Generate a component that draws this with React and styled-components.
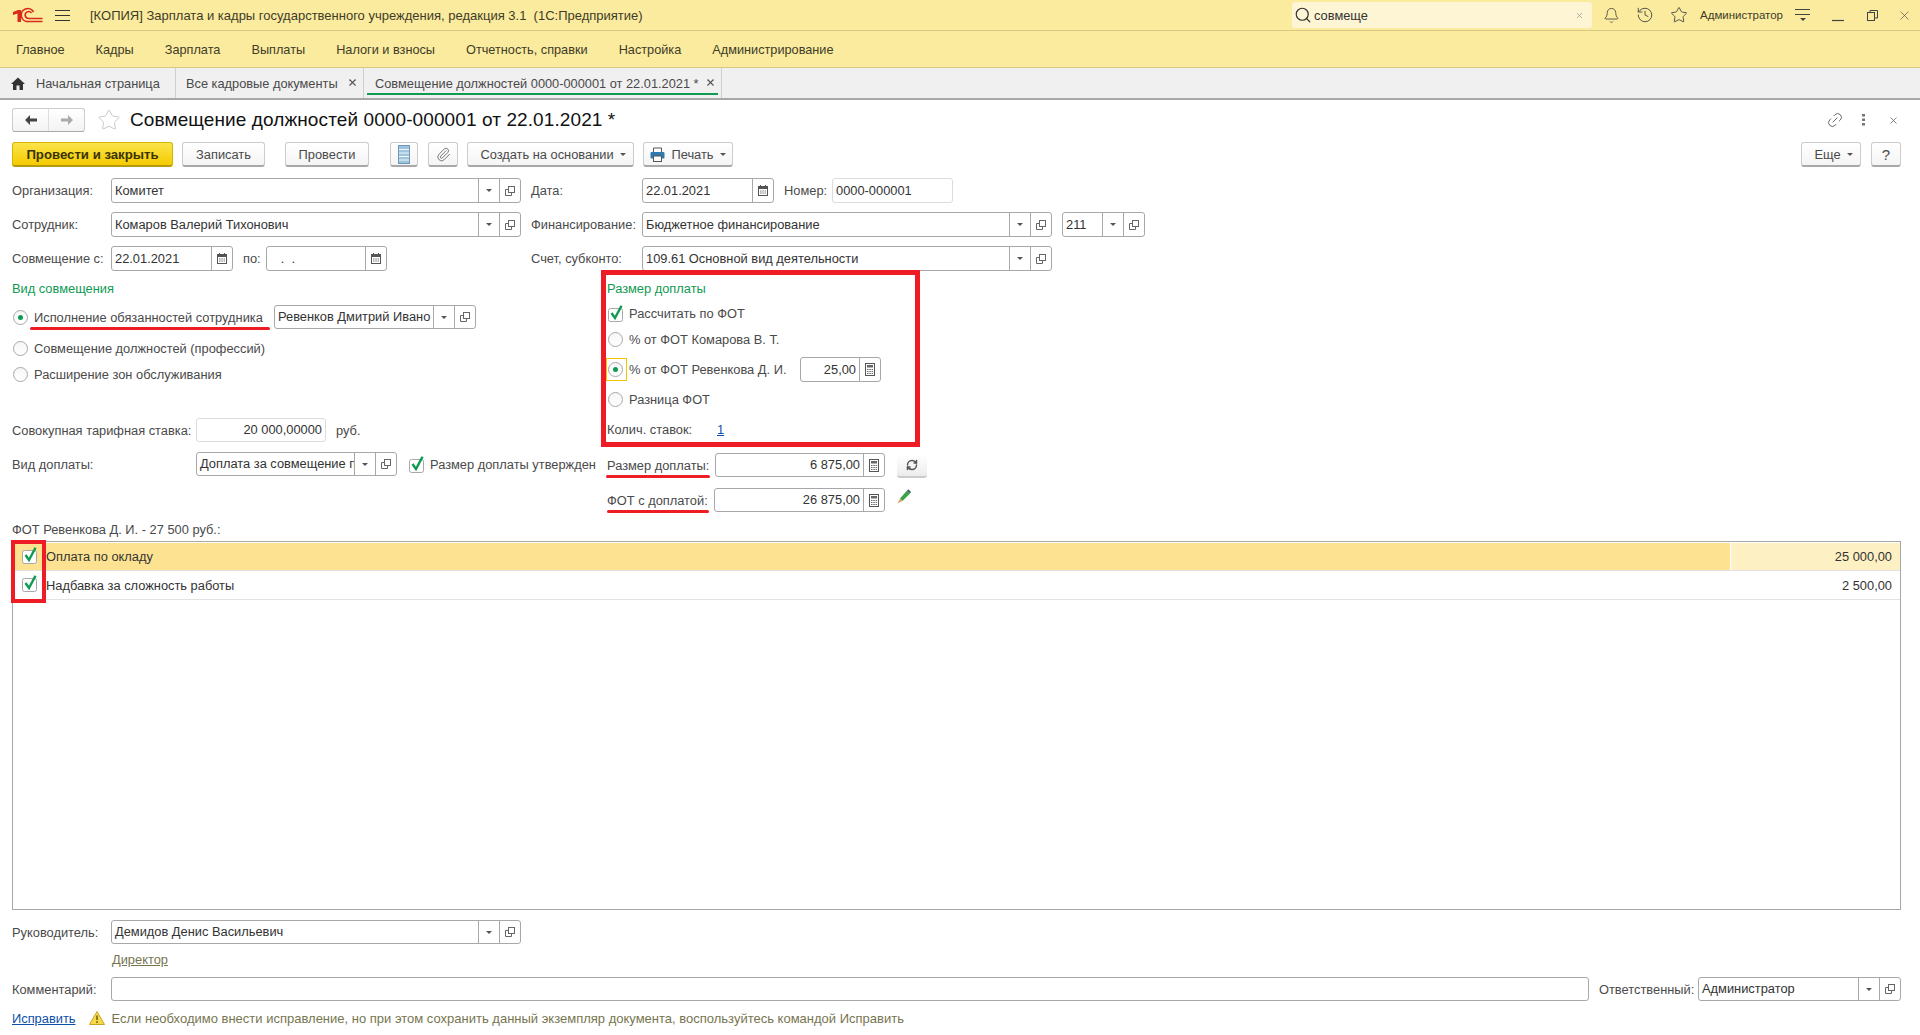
import React from 'react';
import styled, { createGlobalStyle } from 'styled-components';
import { Bell, History, Star, Search, Paperclip, Link2, X, RefreshCw } from 'lucide-react';

const GlobalStyle = createGlobalStyle`
  html, body {
    margin: 0;
    padding: 0;
    background: #fff;
  }
  * {
    box-sizing: border-box;
  }
  body {
    font-family: "Liberation Sans", Arial, sans-serif;
    font-size: 12.85px;
    color: #4a4a4a;
  }
`;

const Page = styled.div`
  display: flex;
  flex-direction: column;
  height: 1035px;
  overflow: hidden;
`;

/* top window chrome */
const TitleBar = styled.div`
  display: flex;
  align-items: center;
  height: 31px;
  padding-left: 13px;
  background: #fbeb9e;
  border-bottom: 1px solid #d8c884;
  color: #3e3c28;
`;

const Logo = styled.svg`
  width: 30px;
  height: 16px;
  flex: none;
`;

const Burger = styled.div`
  width: 15px;
  height: 11px;
  margin-left: 12px;
  flex: none;
  border-top: 1px solid #333;
  border-bottom: 1px solid #333;
  position: relative;
  &::after {
    content: '';
    position: absolute;
    left: 0;
    right: 0;
    top: 4px;
    height: 1px;
    background: #333;
  }
`;

const AppTitle = styled.div`
  margin-left: 20px;
  font-size: 13px;
  white-space: pre;
`;

const SearchBox = styled.div`
  display: flex;
  align-items: center;
  width: 300px;
  height: 26px;
  margin-left: auto;
  padding: 0 8px 0 2px;
  background: #fdf5d4;
  border-radius: 3px;
  color: #333;
`;

const SearchText = styled.span`
  flex: 1;
  margin-left: 2px;
`;

const Slot = styled.div`
  display: flex;
  align-items: center;
  justify-content: center;
  flex: none;
  width: ${({ $w }) => $w}px;
  margin-left: ${({ $ml }) => $ml || 0}px;
  color: #444;
`;

const UserName = styled.div`
  width: 82px;
  margin-left: 4px;
  font-size: 11.5px;
  white-space: nowrap;
`;

const MenuBar = styled.div`
  display: flex;
  align-items: center;
  gap: 31px;
  height: 37px;
  padding-left: 16px;
  background: #fbeb9e;
  border-bottom: 1px solid #d8c884;
  font-size: 12.72px;
  color: #3e3c28;
`;

const TabBar = styled.div`
  display: flex;
  height: 32px;
  background: #f0f0f0;
  border-bottom: 2px solid #a8a8a8;
`;

const Tab = styled.div`
  position: relative;
  display: flex;
  align-items: center;
  width: ${({ $w }) => $w}px;
  padding-left: ${({ $pl }) => $pl}px;
  border-right: 1px solid #cfcfcf;
  font-size: 12.8px;
  white-space: nowrap;
  ${({ $active }) => $active && `
    &::after {
      content: '';
      position: absolute;
      left: 3px;
      right: 3px;
      bottom: 3px;
      height: 2px;
      background: #0f9a52;
    }
  `}
`;

const TabClose = styled.span`
  position: absolute;
  right: 5px;
  top: 9px;
  display: flex;
  color: #555;
`;

/* form */
const FormBody = styled.div`
  flex: 1;
  display: flex;
  flex-direction: column;
  min-height: 0;
  padding: 0 19px 0 12px;
`;

const FormHeader = styled.div`
  display: flex;
  align-items: center;
  height: 24px;
  margin: 8px -8px 0 0;
`;

const NavGroup = styled.div`
  display: flex;
  width: 73px;
  height: 24px;
  border: 1px solid #ccc;
  border-bottom-color: #a8a8a8;
  border-radius: 3px;
  background: linear-gradient(#fff, #f3f3f3);
`;

const NavButton = styled.div`
  flex: 1;
  display: flex;
  align-items: center;
  justify-content: center;
  color: ${({ $off }) => ($off ? '#aaa' : '#444')};
  & + & {
    border-left: 1px solid #ddd;
  }
`;

const FormTitle = styled.div`
  margin-left: 9px;
  font-size: 19px;
  letter-spacing: 0.1px;
  color: #111;
  white-space: nowrap;
`;

const Toolbar = styled.div`
  display: flex;
  align-items: stretch;
  height: 25px;
  margin-top: 10px;
`;

const Button = styled.div`
  display: flex;
  align-items: center;
  justify-content: center;
  gap: 6px;
  flex: none;
  width: ${({ $w }) => $w}px;
  margin-left: ${({ $ml }) => $ml || 0}px;
  padding-left: ${({ $pl }) => $pl || 0}px;
  border: 1px solid #ccc;
  border-bottom: 2px solid #a8a8a8;
  border-radius: 3px;
  background: linear-gradient(#fff, #f4f4f4);
  font-size: ${({ $big }) => ($big ? '15px' : 'inherit')};
  white-space: nowrap;
`;

const PrimaryButton = styled(Button)`
  border-color: #d7b400;
  border-bottom-color: #b59a10;
  background: linear-gradient(#fbe44a, #f5cb00);
  font-size: 13.2px;
  font-weight: bold;
  color: #3b3300;
`;

const PushRight = styled.div`
  margin-left: auto;
`;

const Caret = styled.span`
  width: 0;
  height: 0;
  border-left: 3px solid transparent;
  border-right: 3px solid transparent;
  border-top: 3px solid #555;
  flex: none;
`;

const Row = styled.div`
  display: flex;
  align-items: center;
  height: ${({ $h }) => $h || 25}px;
  margin-top: ${({ $mt }) => $mt || 0}px;
  padding-left: ${({ $pl }) => $pl || 0}px;
`;

const Label = styled.div`
  flex: none;
  width: ${({ $w }) => ($w ? `${$w}px` : 'auto')};
  margin-left: ${({ $ml }) => $ml || 0}px;
  white-space: nowrap;
`;

const Field = styled.div`
  display: flex;
  flex: ${({ $w }) => ($w ? 'none' : 1)};
  width: ${({ $w }) => ($w ? `${$w}px` : 'auto')};
  height: ${({ $h }) => $h || 25}px;
  margin-left: ${({ $ml }) => $ml || 0}px;
  border: 1px solid ${({ $light }) => ($light ? '#dcdcdc' : '#a8a8a8')};
  border-radius: 3px;
  background: #fff;
  overflow: hidden;
`;

const FieldValue = styled.div`
  flex: 1;
  min-width: 0;
  padding: 0 ${({ $right }) => ($right ? 3 : 2)}px 0 3px;
  line-height: ${({ $h }) => $h || 23}px;
  color: #333;
  white-space: pre;
  overflow: hidden;
  text-align: ${({ $right }) => ($right ? 'right' : 'left')};
`;

const FieldButton = styled.div`
  display: flex;
  align-items: center;
  justify-content: center;
  flex: none;
  width: 21px;
  border-left: 1px solid #a8a8a8;
  color: #555;
`;

const LowerForm = styled.div`
  display: flex;
`;

const LeftColumn = styled.div`
  flex: none;
  width: 589px;
`;

const RightColumn = styled.div`
  flex: 1;
`;

const SectionTitle = styled.div`
  height: 16px;
  line-height: 16px;
  margin-top: ${({ $mt }) => $mt || 0}px;
  margin-left: ${({ $ml }) => $ml || 0}px;
  color: #0f9a52;
`;

const RedFrame = styled.div`
  display: flex;
  flex-direction: column;
  width: 319px;
  height: 177px;
  margin-top: -1px;
  border: 5px solid #ee1c25;
`;

const RadioRow = styled(Row)`
  gap: 6px;
`;

const Radio = styled.span`
  position: relative;
  display: flex;
  align-items: center;
  justify-content: center;
  flex: none;
  width: 15px;
  height: 15px;
  border: 1px solid #a8a8a8;
  border-radius: 50%;
  background: linear-gradient(#f6f6f6, #fff);
  ${({ $on }) => $on && `
    &::after {
      content: '';
      width: 5px;
      height: 5px;
      border-radius: 50%;
      background: #0f9a52;
    }
  `}
  ${({ $focus }) => $focus && `
    &::before {
      content: '';
      position: absolute;
      left: -3px;
      right: -5px;
      top: -5px;
      bottom: -5px;
      border: 1px solid #f5c400;
    }
  `}
`;

const Marked = styled.span`
  position: relative;
  white-space: nowrap;
  &::after {
    content: '';
    position: absolute;
    left: ${({ $l }) => $l || 0}px;
    right: ${({ $r }) => $r || 0}px;
    bottom: -5px;
    height: 3px;
    border-radius: 2px;
    background: #ee1c25;
  }
`;

const LinkText = styled.span`
  color: ${({ $muted }) => ($muted ? '#77754f' : '#0b4fa8')};
  text-decoration: underline;
  margin-left: ${({ $ml }) => $ml || 0}px;
`;

const RefreshButton = styled.div`
  display: flex;
  align-items: center;
  justify-content: center;
  width: 30px;
  height: 23px;
  margin: 2px 0 0 12px;
  border-bottom: 2px solid #ccc;
  border-radius: 3px;
  background: linear-gradient(#fff, #ececec);
  color: #555;
`;

const FieldCaption = styled.div`
  height: 16px;
  line-height: 16px;
  margin-top: 10px;
`;

const SalaryTable = styled.div`
  position: relative;
  flex: 1;
  margin-top: 3px;
  padding-top: 1px;
  border: 1px solid #a8a8a8;
`;

const CheckAnnotation = styled.div`
  position: absolute;
  left: -2px;
  top: -2px;
  width: 35px;
  height: 63px;
  border: 4px solid #ee1c25;
`;

const TableRow = styled.div`
  display: grid;
  grid-template-columns: 1718px 1fr;
  height: ${({ $h }) => $h}px;
  border-bottom: 1px solid #e2e2e2;
  color: #333;
`;

const NameCell = styled.div`
  display: flex;
  align-items: center;
  gap: 8px;
  padding-left: 9px;
  background: ${({ $current }) => ($current ? '#fde391' : 'transparent')};
  border-right: 1px solid #fff;
  svg {
    margin-bottom: 3px;
  }
`;

const ValueCell = styled.div`
  display: flex;
  align-items: center;
  justify-content: flex-end;
  padding-right: 8px;
  background: ${({ $current }) => ($current ? '#fdf1c3' : 'transparent')};
`;

const BottomForm = styled.div`
  flex: none;
  padding-bottom: 9px;
`;

const Hint = styled.div`
  display: flex;
  align-items: center;
  height: 16px;
  margin-top: 9px;
  white-space: nowrap;
`;

const HintText = styled.span`
  margin-left: 6px;
  font-size: 13px;
  color: #77754f;
`;

const DirectorLine = styled.div`
  height: 16px;
  line-height: 16px;
  margin-top: 8px;
`;

/* small drawings */
const LogoIcon = () => (
  <Logo viewBox="0 0 30 16">
    <path d="M0 5 L5 3 H8 V15 H4.5 V6.5 L0 8 Z" fill="#d92a1e" />
    <g fill="none" stroke="#d92a1e" strokeWidth="1.7">
      <path d="M20.5 5 A6.5 6.5 0 1 0 15.5 14.5 H29.5" />
      <path d="M18.5 6 A3.5 3.5 0 1 0 15.5 11.5 H29.5" />
    </g>
  </Logo>
);

const HomeIcon = () => (
  <svg width="14" height="13" viewBox="0 0 14 13">
    <path d="M7 0.5 L14 7 H12 V13 H8.5 V8.5 H5.5 V13 H2 V7 H0 Z" fill="#333" />
  </svg>
);

const ArrowIcon = ({ dir }) => (
  <svg width="14" height="12" viewBox="0 0 14 12">
    <path
      d={dir === 'left' ? 'M6 1 L1 6 L6 11 V7.5 H13 V4.5 H6 Z' : 'M8 1 L13 6 L8 11 V7.5 H1 V4.5 H8 Z'}
      fill="currentColor"
    />
  </svg>
);

const ListIcon = () => (
  <svg width="12" height="19" viewBox="0 0 12 19">
    <rect x="0.5" y="0.5" width="11" height="18" fill="#9ec3dc" stroke="#6f96b4" />
    <path d="M1 4.5 H11 M1 8 H11 M1 11.5 H11 M1 15 H11" stroke="#eef5fa" strokeWidth="1.2" />
  </svg>
);

const PrinterIcon = () => (
  <svg width="15" height="15" viewBox="0 0 15 15">
    <path d="M3.5 5 V1 H11.5 V5" fill="#fff" stroke="#555" />
    <rect x="0.5" y="5" width="14" height="6.5" rx="1" fill="#2f7ab0" />
    <rect x="3.5" y="9" width="8" height="5.5" fill="#fff" stroke="#555" />
  </svg>
);

const DropIcon = () => <Caret />;

const OpenIcon = () => (
  <svg width="10" height="10" viewBox="0 0 10 10" fill="none" stroke="#666">
    <rect x="3.5" y="0.5" width="6" height="6" fill="#fff" />
    <path d="M3.5 3.5 H0.5 V9.5 H6.5 V6.5" />
  </svg>
);

const CalendarIcon = () => (
  <svg width="10" height="11" viewBox="0 0 10 11">
    <rect x="0.5" y="1.5" width="9" height="9" fill="#fff" stroke="#555" />
    <rect x="0.5" y="1.5" width="9" height="2.5" fill="#555" />
    <path d="M2.5 0 V2 M7.5 0 V2" stroke="#555" />
    <path d="M2 6 H3.5 M4.3 6 H5.8 M6.6 6 H8 M2 8 H3.5 M4.3 8 H5.8 M6.6 8 H8" stroke="#777" />
  </svg>
);

const CalcIcon = () => (
  <svg width="10" height="13" viewBox="0 0 10 13">
    <rect x="0.5" y="0.5" width="9" height="12" fill="#fff" stroke="#555" />
    <rect x="2" y="2" width="6" height="2.5" fill="#666" />
    <path d="M2 6.5 H3.5 M4.3 6.5 H5.8 M6.6 6.5 H8 M2 8.5 H3.5 M4.3 8.5 H5.8 M6.6 8.5 H8 M2 10.5 H3.5 M4.3 10.5 H5.8 M6.6 10.5 H8" stroke="#666" />
  </svg>
);

const CheckIcon = () => (
  <svg width="16" height="17" viewBox="0 0 16 17" style={{ flex: 'none', overflow: 'visible' }}>
    <rect x="0.5" y="3.5" width="14" height="13" rx="2" fill="#fff" stroke="#a8a8a8" />
    <path d="M3.5 8 L7 13 L13.5 0.8" fill="none" stroke="#0f9a52" strokeWidth="2.4" />
  </svg>
);

const PencilIcon = () => (
  <svg width="14" height="15" viewBox="0 0 14 15" style={{ marginLeft: 12, marginBottom: 8 }}>
    <path d="M3 9.5 L10 1.5 L13 4.5 L5.5 12 Z" fill="#3aa24a" />
    <path d="M10 1.5 L11.2 0.3 L14 3 L13 4.5 Z" fill="#44546a" />
    <path d="M3 9.5 L5.5 12 L0.5 14.5 Z" fill="#d9a766" />
  </svg>
);

const WarnIcon = () => (
  <svg width="16" height="14" viewBox="0 0 16 14" style={{ marginLeft: 14, flex: 'none' }}>
    <path d="M8 0.5 L15.5 13.5 H0.5 Z" fill="#f7d84a" stroke="#c9a520" />
    <path d="M8 4.5 V9 M8 10.3 V12" stroke="#6b5a10" strokeWidth="1.5" />
  </svg>
);

const HistoryIcon = () => <History size={18} strokeWidth={1.2} />;

const SelectField = ({ value, w, ml, h = 25 }) => (
  <Field $w={w} $ml={ml} $h={h}>
    <FieldValue $h={h - 2}>{value}</FieldValue>
    <FieldButton><DropIcon /></FieldButton>
    <FieldButton><OpenIcon /></FieldButton>
  </Field>
);

const DateField = ({ value, w, ml }) => (
  <Field $w={w} $ml={ml}>
    <FieldValue>{value}</FieldValue>
    <FieldButton><CalendarIcon /></FieldButton>
  </Field>
);

const CalcField = ({ value, w, h }) => (
  <Field $w={w} $h={h}>
    <FieldValue $right $h={h - 2}>{value}</FieldValue>
    <FieldButton><CalcIcon /></FieldButton>
  </Field>
);

const menu = ['Главное', 'Кадры', 'Зарплата', 'Выплаты', 'Налоги и взносы', 'Отчетность, справки', 'Настройка', 'Администрирование'];

const salaryRows = [
  { name: 'Оплата по окладу', value: '25 000,00', current: true, h: 28 },
  { name: 'Надбавка за сложность работы', value: '2 500,00', h: 29 },
];

export default function App() {
  return (
    <Page>
      <GlobalStyle />
      <TitleBar>
        <LogoIcon />
        <Burger />
        <AppTitle>[КОПИЯ] Зарплата и кадры государственного учреждения, редакция 3.1  (1С:Предприятие)</AppTitle>
        <SearchBox>
          <Search size={18} strokeWidth={1.6} />
          <SearchText>совмеще</SearchText>
          <X size={9} color="#999" />
        </SearchBox>
        <Slot $w={34} $ml={2}><Bell size={17} strokeWidth={1.2} /></Slot>
        <Slot $w={34}><HistoryIcon /></Slot>
        <Slot $w={34}><Star size={18} strokeWidth={1.2} /></Slot>
        <UserName>Администратор</UserName>
        <Slot $w={34} $ml={4}>
          <svg width="16" height="14" viewBox="0 0 16 14">
            <path d="M0 1.5 H15 M0 6.5 H15" stroke="#444" />
            <path d="M5 10 H11 L8 13 Z" fill="#444" />
          </svg>
        </Slot>
        <Slot $w={35}>
          <svg width="12" height="14" viewBox="0 0 12 14">
            <path d="M0 12.5 H12" stroke="#444" strokeWidth="1.2" />
          </svg>
        </Slot>
        <Slot $w={34}>
          <svg width="11" height="11" viewBox="0 0 11 11" fill="none" stroke="#444">
            <rect x="0.5" y="2.5" width="7" height="8" />
            <path d="M3 2.5 V0.5 H10.5 V8 H7.5" />
          </svg>
        </Slot>
        <Slot $w={31}><X size={15} strokeWidth={1} /></Slot>
      </TitleBar>

      <MenuBar>
        {menu.map((item) => <span key={item}>{item}</span>)}
      </MenuBar>

      <TabBar>
        <Tab $w={176} $pl={11}>
          <HomeIcon />
          <Label $ml={11}>Начальная страница</Label>
        </Tab>
        <Tab $w={188} $pl={10}>
          Все кадровые документы
          <TabClose><X size={11} strokeWidth={2.4} /></TabClose>
        </Tab>
        <Tab $w={358} $pl={11} $active>
          Совмещение должностей 0000-000001 от 22.01.2021 *
          <TabClose><X size={11} strokeWidth={2.4} /></TabClose>
        </Tab>
      </TabBar>

      <FormBody>
        <FormHeader>
          <NavGroup>
            <NavButton><ArrowIcon dir="left" /></NavButton>
            <NavButton $off><ArrowIcon dir="right" /></NavButton>
          </NavGroup>
          <Slot $w={25} $ml={11}><Star size={24} strokeWidth={0.8} color="#bbb" /></Slot>
          <FormTitle>Совмещение должностей 0000-000001 от 22.01.2021 *</FormTitle>
          <PushRight />
          <Slot $w={29}><Link2 size={18} strokeWidth={1} style={{ transform: 'rotate(-45deg)' }} /></Slot>
          <Slot $w={29}>
            <svg width="3" height="12" viewBox="0 0 3 12" fill="#777">
              <rect width="3" height="2.5" />
              <rect y="4.5" width="3" height="2.5" />
              <rect y="9" width="3" height="2.5" />
            </svg>
          </Slot>
          <Slot $w={31}><X size={11} strokeWidth={1.4} /></Slot>
        </FormHeader>

        <Toolbar>
          <PrimaryButton $w={161}>Провести и закрыть</PrimaryButton>
          <Button $w={83} $ml={9}>Записать</Button>
          <Button $w={84} $ml={20}>Провести</Button>
          <Button $w={28} $ml={21}><ListIcon /></Button>
          <Button $w={30} $ml={10}><Paperclip size={15} strokeWidth={1.4} color="#666" /></Button>
          <Button $w={167} $ml={9} $pl={5}>Создать на основании <Caret /></Button>
          <Button $w={90} $ml={9}><PrinterIcon /> Печать <Caret /></Button>
          <PushRight />
          <Button $w={60} $pl={5}>Еще <Caret /></Button>
          <Button $w={30} $ml={10} $big>?</Button>
        </Toolbar>

        <Row $mt={11}>
          <Label $w={99}>Организация:</Label>
          <SelectField value="Комитет" w={410} />
          <Label $w={111} $ml={10}>Дата:</Label>
          <DateField value="22.01.2021" w={132} />
          <Label $w={48} $ml={10}>Номер:</Label>
          <Field $w={121} $light><FieldValue>0000-000001</FieldValue></Field>
        </Row>
        <Row $mt={9}>
          <Label $w={99}>Сотрудник:</Label>
          <SelectField value="Комаров Валерий Тихонович" w={410} />
          <Label $w={111} $ml={10}>Финансирование:</Label>
          <SelectField value="Бюджетное финансирование" w={410} />
          <SelectField value="211" w={83} ml={10} />
        </Row>
        <Row $mt={9}>
          <Label $w={99}>Совмещение с:</Label>
          <DateField value="22.01.2021" w={122} />
          <Label $w={23} $ml={10}>по:</Label>
          <DateField value="   .  ." w={121} />
          <Label $w={111} $ml={144}>Счет, субконто:</Label>
          <SelectField value="109.61 Основной вид деятельности" w={410} />
        </Row>

        <LowerForm>
          <LeftColumn>
            <SectionTitle $mt={10}>Вид совмещения</SectionTitle>
            <RadioRow $mt={8} $h={24} $pl={1}>
              <Radio $on />
              <Label $w={234}><Marked $l={-4} $r={-7}>Исполнение обязанностей сотрудника</Marked></Label>
              <SelectField value="Ревенков Дмитрий Ивано" w={202} h={24} />
            </RadioRow>
            <RadioRow $mt={9} $h={20} $pl={1}>
              <Radio />
              Совмещение должностей (профессий)
            </RadioRow>
            <RadioRow $mt={6} $h={20} $pl={1}>
              <Radio />
              Расширение зон обслуживания
            </RadioRow>
            <Row $mt={34} $h={24}>
              <Label $w={184}>Совокупная тарифная ставка:</Label>
              <Field $w={130} $h={24} $light><FieldValue $right $h={22}>20 000,00000</FieldValue></Field>
              <Label $ml={10}>руб.</Label>
            </Row>
            <Row $mt={10} $h={24}>
              <Label $w={184}>Вид доплаты:</Label>
              <SelectField value="Доплата за совмещение п" w={201} h={24} />
              <Slot $w={16} $ml={12}><CheckIcon /></Slot>
              <Label $ml={5}>Размер доплаты утвержден</Label>
            </Row>
          </LeftColumn>

          <RightColumn>
            <RedFrame>
              <SectionTitle $mt={6} $ml={1}>Размер доплаты</SectionTitle>
              <RadioRow $mt={6} $h={20} $pl={2}><CheckIcon /><Label $ml={-1}>Рассчитать по ФОТ</Label></RadioRow>
              <RadioRow $mt={6} $h={20} $pl={2}><Radio />% от ФОТ Комарова В. Т.</RadioRow>
              <RadioRow $mt={8} $h={25} $pl={2}>
                <Radio $on $focus />
                <Label $w={165}>% от ФОТ Ревенкова Д. И.</Label>
                <CalcField value="25,00" w={81} h={25} />
              </RadioRow>
              <RadioRow $mt={7} $h={20} $pl={2}><Radio />Разница ФОТ</RadioRow>
              <Row $mt={10} $h={20} $pl={1}>
                <Label $w={110}>Колич. ставок:</Label>
                <LinkText>1</LinkText>
              </Row>
            </RedFrame>
            <Row $mt={6} $h={24} $pl={6}>
              <Label $w={108}><Marked $l={-1} $r={-1}>Размер доплаты:</Marked></Label>
              <CalcField value="6 875,00" w={170} h={24} />
              <RefreshButton><RefreshCw size={12} strokeWidth={3} /></RefreshButton>
            </Row>
            <Row $mt={11} $h={24} $pl={6}>
              <Label $w={107}><Marked $l={0} $r={-1}>ФОТ с доплатой:</Marked></Label>
              <CalcField value="26 875,00" w={171} h={24} />
              <PencilIcon />
            </Row>
          </RightColumn>
        </LowerForm>

        <FieldCaption>ФОТ Ревенкова Д. И. - 27 500 руб.:</FieldCaption>
        <SalaryTable>
          {salaryRows.map((row) => (
            <TableRow key={row.name} $h={row.h}>
              <NameCell $current={row.current}>
                <CheckIcon />
                {row.name}
              </NameCell>
              <ValueCell $current={row.current}>{row.value}</ValueCell>
            </TableRow>
          ))}
          <CheckAnnotation />
        </SalaryTable>

        <BottomForm>
          <Row $mt={10} $h={24}>
            <Label $w={99}>Руководитель:</Label>
            <SelectField value="Демидов Денис Васильевич" w={410} h={24} />
          </Row>
          <DirectorLine><LinkText $muted $ml={100}>Директор</LinkText></DirectorLine>
          <Row $mt={9} $h={24}>
            <Label $w={99}>Комментарий:</Label>
            <Field $h={24} />
            <Label $w={99} $ml={10}>Ответственный:</Label>
            <SelectField value="Администратор" w={203} h={24} />
          </Row>
          <Hint>
            <LinkText>Исправить</LinkText>
            <WarnIcon />
            <HintText>Если необходимо внести исправление, но при этом сохранить данный экземпляр документа, воспользуйтесь командой Исправить</HintText>
          </Hint>
        </BottomForm>
      </FormBody>
    </Page>
  );
}
